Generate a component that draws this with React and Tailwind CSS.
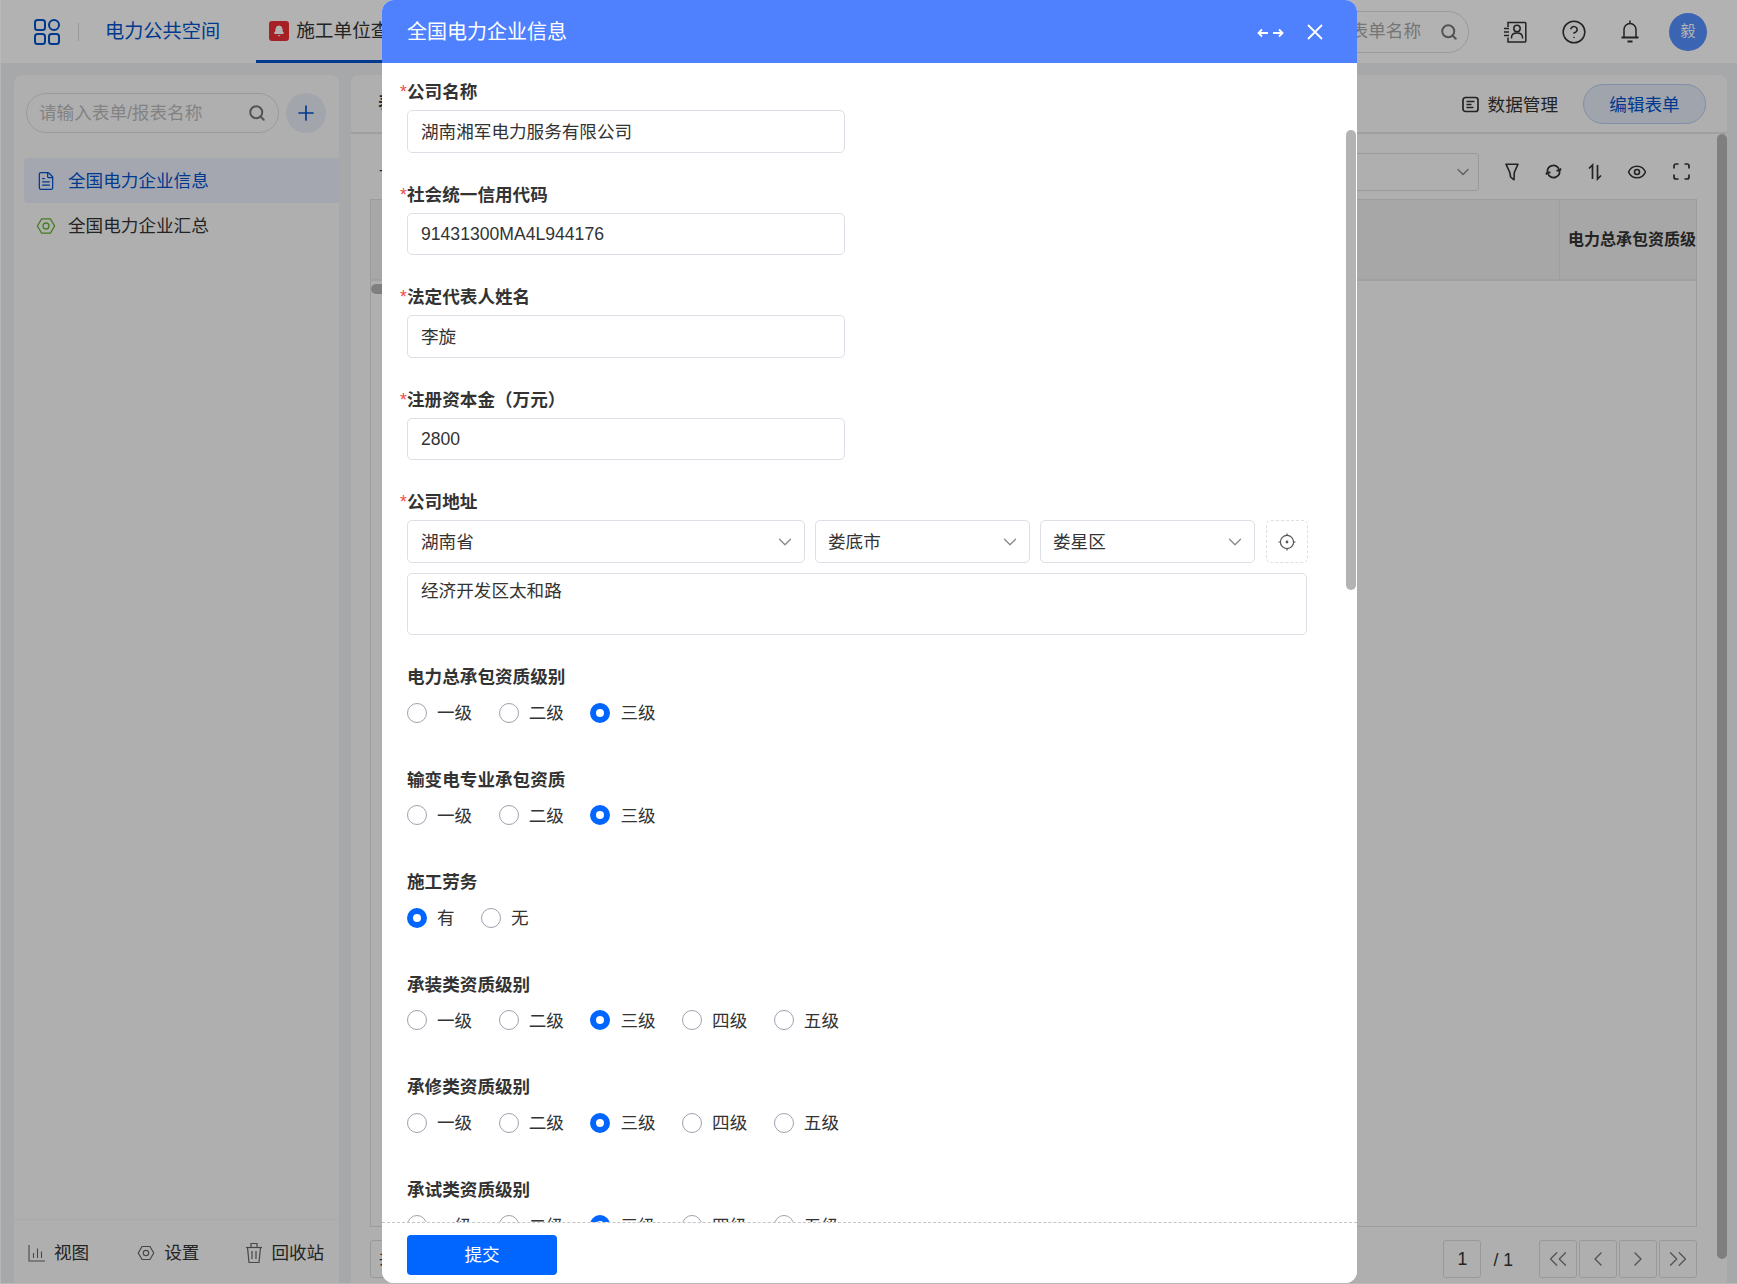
import { useState } from "react";
import {
  Search,
  Plus,
  CircleHelp,
  Bell,
  Eye,
  ChevronDown,
  ChevronLeft,
  ChevronRight,
  ChevronsLeft,
  ChevronsRight,
  FileText,
} from "lucide-react";

const FONT = "font-['Liberation_Sans','Noto_Sans_CJK_SC',sans-serif]";

const HexIcon = ({ className }) => (
  <svg className={className} viewBox="0 0 20 20" fill="none" stroke="currentColor" strokeWidth="1.3">
    <path d="M5.6 2.8h8.8L18.6 10l-4.2 7.2H5.6L1.4 10z" />
    <circle cx="10" cy="10" r="3" />
  </svg>
);

const GridLogo = () => (
  <svg className="h-[26px] w-[26px] text-[#0052cc]" viewBox="0 0 26 26" fill="none" stroke="currentColor" strokeWidth="2">
    <rect x="1" y="1" width="10" height="10" rx="2.5" />
    <rect x="15" y="1" width="10" height="10" rx="5" />
    <rect x="1" y="15" width="10" height="10" rx="2.5" />
    <rect x="15" y="15" width="10" height="10" rx="2.5" />
  </svg>
);

const ContactIcon = () => (
  <svg className="h-[24px] w-[24px] text-[#333]" viewBox="0 0 24 24" fill="none" stroke="currentColor" strokeWidth="1.5">
    <path d="M5 7V2.5h17a.8.8 0 0 1 .8.8v17.9a.8.8 0 0 1-.8.8H5v-4.5" />
    <path d="M1 8.5h5M1 12h5M1 15.5h5" />
    <circle cx="14" cy="8.5" r="3.2" />
    <path d="M8.5 18.5v-1c0-2.5 2-4.5 5.5-4.5s5.5 2 5.5 4.5v1" />
  </svg>
);

const BellIcon = () => (
  <svg className="h-[24px] w-[18px] text-[#333]" viewBox="0 0 18 24" fill="none" stroke="currentColor" strokeWidth="1.5">
    <path d="M9 0.5v3" />
    <path d="M3 17V9.5a6 6 0 0 1 12 0V17" />
    <path d="M0.5 17.5h17" strokeWidth="2" />
    <path d="M6.5 21.5h5" strokeWidth="2" />
  </svg>
);

const DataIcon = () => (
  <svg className="h-[17px] w-[17px] text-[#333]" viewBox="0 0 17 17" fill="none" stroke="currentColor" strokeWidth="1.7">
    <rect x="1" y="1.5" width="15" height="14" rx="2.5" />
    <path d="M4.5 5.5h8M4.5 8.5h5M4.5 11.5h7" />
  </svg>
);

const FunnelIcon = () => (
  <svg className="h-[18px] w-[14px] text-[#333]" viewBox="0 0 14 18" fill="none" stroke="currentColor" strokeWidth="1.6">
    <path d="M1 1.2h12L9.3 9.5 9 16.8 5.6 14 4.8 9.5z" strokeLinejoin="round" />
  </svg>
);

const SyncIcon = () => (
  <svg className="h-[17px] w-[17px] text-[#333]" viewBox="0 0 17 17" fill="none" stroke="currentColor" strokeWidth="1.7">
    <path d="M2.3 8.5a6.2 6.2 0 0 1 10.6-4.2l1.6 3" />
    <path d="M14.7 8.5a6.2 6.2 0 0 1-10.6 4.2l-1.6-3" />
    <path d="M16 5.5 14.5 8l-3-.6" />
    <path d="M1 11.5l1.5-2.5 3 .6" />
  </svg>
);

const SortIcon = () => (
  <svg className="h-[18px] w-[14px] text-[#333]" viewBox="0 0 14 18" fill="none" stroke="currentColor" strokeWidth="1.7">
    <path d="M4.5 16V2L1 5.5" />
    <path d="M9.5 2v14l3.5-3.5" />
  </svg>
);

const CornersIcon = () => (
  <svg className="h-[17px] w-[17px] text-[#333]" viewBox="0 0 17 17" fill="none" stroke="currentColor" strokeWidth="1.7">
    <path d="M1 5.5V3a2 2 0 0 1 2-2h2.5M11.5 1H14a2 2 0 0 1 2 2v2.5M16 11.5V14a2 2 0 0 1-2 2h-2.5M5.5 16H3a2 2 0 0 1-2-2v-2.5" />
  </svg>
);

const ChartIcon = () => (
  <svg className="h-[18px] w-[18px] text-[#666]" viewBox="0 0 18 18" fill="none" stroke="currentColor" strokeWidth="1.1">
    <path d="M1 1v16h16" />
    <path d="M5.5 14V9M9.5 14V4.5M13.5 14V7.5" />
  </svg>
);

const TrashIcon = () => (
  <svg className="h-[22px] w-[18px] text-[#666]" viewBox="0 0 18 22" fill="none" stroke="currentColor" strokeWidth="1.2">
    <path d="M1 5.5h16" />
    <path d="M6 5V1.5h6V5" />
    <path d="M2.5 5.5 4 20.5h10l1.5-15" />
    <path d="M7 9v8M11 9v8" />
  </svg>
);

const TargetIcon = () => (
  <svg className="h-[18px] w-[18px] text-[#555]" viewBox="0 0 18 18" fill="none" stroke="currentColor" strokeWidth="1.2">
    <circle cx="9" cy="9" r="6.6" />
    <circle cx="9" cy="9" r="0.8" fill="currentColor" />
    <path d="M9 0.5v2.5M9 15v2.5M0.5 9H3M15 9h2.5" />
  </svg>
);

const Field = ({ label, required, children }) => (
  <div className="mb-[27px]">
    <Label required={required}>{label}</Label>
    <div className="mt-[3px]">{children}</div>
  </div>
);

const Label = ({ required, children }) => (
  <div className="relative h-[30px] text-[17.6px] leading-[30px] font-bold text-[#333]">
    {required && (
      <span className="absolute top-0 left-[-7px] font-normal text-[#f04b4b]">*</span>
    )}
    {children}
  </div>
);

const TextBox = ({ value }) => (
  <div className="flex h-[42.5px] w-[438px] items-center rounded-[5px] border border-[#dcdfe6] px-[13px] pt-[1px] text-[17.6px] text-[#333]">
    {value}
  </div>
);

const SelectBox = ({ value, className }) => (
  <div
    className={[
      "flex h-[43px] items-center justify-between rounded-[5px] border border-[#dcdfe6] pt-[1px] pr-[8px] text-[17.6px] text-[#333]",
      className,
    ].join(" ")}
  >
    {value}
    <ChevronDown className="h-[22px] w-[22px] text-[#888]" strokeWidth={1.4} />
  </div>
);

const RadioRow = ({ label, options, checked }) => (
  <div className="mb-[30.5px]">
    <Label>{label}</Label>
    <div className="flex h-[42px] items-center gap-[26.5px]">
      {options.map((opt) => (
        <div key={opt} className="flex items-center gap-[10px] text-[17.6px] text-[#333]">
          {opt === checked ? (
            <span className="h-[20px] w-[20px] rounded-full border-[6px] border-[#0066ff] bg-white" />
          ) : (
            <span className="h-[20px] w-[20px] rounded-full border-[1.5px] border-[#a0a0b0] bg-white" />
          )}
          <span className="pt-[1px]">{opt}</span>
        </div>
      ))}
    </div>
  </div>
);

const levels3 = ["一级", "二级", "三级"];
const levels5 = ["一级", "二级", "三级", "四级", "五级"];

const PageButton = ({ children }) => (
  <div className="flex h-[38px] w-[38px] items-center justify-center rounded-[3px] border border-[#dcdcdc] text-[#777]">
    {children}
  </div>
);

export default function App() {
  const [company] = useState("湖南湘军电力服务有限公司");

  return (
    <div className={`relative flex h-screen w-full flex-col overflow-hidden border-b border-l border-[#b8b8b8] bg-[#f0f1f4] ${FONT}`}>
      {/* top bar */}
      <header className="flex h-[63px] shrink-0 items-center bg-white pr-[30px] pl-[33px]">
        <GridLogo />
        <div className="mx-[18px] h-[18px] w-px bg-[#ddd]" />
        <span className="ml-[8px] pt-[1px] text-[19.2px] text-[#0052cc]">电力公共空间</span>
        <div className="ml-[36px] flex h-full items-center gap-[7px] border-b-[3px] border-[#0052cc] px-[13px] pt-[2px] text-[18.7px] text-[#333]">
          <span className="flex h-[20px] w-[20px] items-center justify-center rounded-[3px] bg-[#ee2f36]">
            <Bell className="h-[12px] w-[12px] fill-white text-white" />
          </span>
          施工单位查询
        </div>
        <div className="ml-auto flex h-[42px] w-[260px] items-center justify-end rounded-full border border-[#ddd] pr-[10px] text-[17.6px] text-[#aaa]">
          <span className="mr-[19px]">请输入表单名称</span>
          <Search className="h-[18px] w-[18px] text-[#777]" strokeWidth={2.6} />
        </div>
        <div className="ml-[34px]">
          <ContactIcon />
        </div>
        <CircleHelp className="ml-[34px] h-[26px] w-[26px] text-[#333]" strokeWidth={1.4} />
        <div className="ml-[34px]">
          <BellIcon />
        </div>
        <div className="ml-[30px] flex h-[38px] w-[38px] items-center justify-center rounded-full bg-[#5590ff] text-[15px] text-white">
          毅
        </div>
      </header>

      <div className="flex min-h-0 flex-1 gap-[12px] pt-[12px] pr-[10px] pl-[13px]">
        {/* sidebar */}
        <aside className="flex w-[325px] shrink-0 flex-col rounded-t-lg bg-[#fbfbfb]">
          <div className="flex items-center gap-[7px] pt-[18px] pl-[12px]">
            <div className="flex h-[40px] w-[253px] items-center justify-between rounded-full border border-[#ddd] pr-[12px] pl-[12px] text-[17.6px] text-[#bbb]">
              请输入表单/报表名称
              <Search className="h-[18px] w-[18px] text-[#777]" strokeWidth={2.6} />
            </div>
            <div className="flex h-[40px] w-[40px] items-center justify-center rounded-full bg-[#e8edf7] text-[#0052cc]">
              <Plus className="h-[24px] w-[24px]" strokeWidth={1.7} />
            </div>
          </div>
          <div className="mt-[25px] pl-[10px] text-[17.6px]">
            <div className="flex h-[45px] items-center gap-[12px] rounded-l bg-[#ebf0fb] pt-[1px] pl-[12px] text-[#0052cc]">
              <FileText className="h-[20px] w-[20px]" strokeWidth={1.5} />
              全国电力企业信息
            </div>
            <div className="flex h-[45px] items-center gap-[12px] pt-[1px] pl-[12px] text-[#333]">
              <HexIcon className="h-[20px] w-[20px] text-[#65b32e]" />
              全国电力企业汇总
            </div>
          </div>
          <div className="mt-auto flex h-[64px] items-center border-t border-[#f4f4f4] pt-[3px] pl-[14px] text-[17.6px] text-[#333]">
            <ChartIcon />
            <span className="ml-[8px]">视图</span>
            <HexIcon className="ml-[48px] h-[18px] w-[18px] text-[#666]" />
            <span className="ml-[9px]">设置</span>
            <div className="ml-[46px]">
              <TrashIcon />
            </div>
            <span className="ml-[8px]">回收站</span>
          </div>
        </aside>

        {/* main panel */}
        <main className="relative flex min-w-0 flex-1 flex-col rounded-t-lg bg-[#fbfbfb]">
          <div className="flex h-[59px] shrink-0 items-center border-b-2 border-[#e6e6e6] pr-[21px] pl-[27px] text-[17.6px] text-[#333]">
            <span className="font-bold">表单</span>
            <div className="ml-auto flex items-center gap-[9px] pt-[3px]">
              <DataIcon />
              数据管理
            </div>
            <div className="ml-[25px] flex h-[40px] w-[123px] items-center justify-center rounded-full border border-[#b7cdf0] bg-[#e6ecf8] pt-[3px] text-[#0052cc]">
              编辑表单
            </div>
          </div>

          <div className="flex min-h-0 flex-1 flex-col pr-[30px] pl-[19px]">
            <div className="flex h-[65px] shrink-0 items-center pt-[10px]">
              <span className="pl-[9px] text-[#333]">一</span>
              <div className="ml-auto flex h-[38px] w-[300px] items-center justify-end rounded-[3px] border border-[#ddd] pr-[5px]">
                <ChevronDown className="h-[20px] w-[20px] text-[#888]" strokeWidth={1.5} />
              </div>
              <div className="ml-[26px] flex w-[192px] items-center justify-between pr-[7px]">
                <FunnelIcon />
                <SyncIcon />
                <SortIcon />
                <Eye className="h-[20px] w-[20px] text-[#333]" strokeWidth={1.9} />
                <CornersIcon />
              </div>
            </div>

            <div className="relative min-h-0 flex-1 border border-[#e0e0e0]">
              <div className="flex h-[81px] justify-end overflow-hidden border-b-2 border-[#e6e6e6] bg-[#f0f0f0]">
                <div className="flex w-[137px] shrink-0 items-center overflow-hidden border-l border-[#e2e2e2] pl-[8px] text-[16px] font-bold whitespace-nowrap text-[#333]">
                  电力总承包资质级别
                </div>
              </div>
              <div className="absolute top-[84px] left-0 h-[10px] w-[40px] rounded-full bg-[#b6b6b6]" />
            </div>

            <div className="flex h-[56px] shrink-0 items-start pt-[13px]">
              <div className="flex h-[38px] w-[60px] items-center rounded-[3px] border border-[#dcdcdc] pl-[8px] text-[16px] text-[#333]">
                共
              </div>
              <div className="ml-auto flex h-[38px] w-[38px] items-center justify-center rounded-[3px] border border-[#dcdcdc] text-[17.6px] text-[#333]">
                1
              </div>
              <span className="mt-[7px] mr-[26px] ml-[12px] text-[17.6px] text-[#333]">/ 1</span>
              <div className="flex gap-[2px]">
                <PageButton>
                  <ChevronsLeft className="h-[30px] w-[30px]" strokeWidth={1} />
                </PageButton>
                <PageButton>
                  <ChevronLeft className="h-[24px] w-[24px]" strokeWidth={1.4} />
                </PageButton>
                <PageButton>
                  <ChevronRight className="h-[24px] w-[24px]" strokeWidth={1.4} />
                </PageButton>
                <PageButton>
                  <ChevronsRight className="h-[30px] w-[30px]" strokeWidth={1} />
                </PageButton>
              </div>
            </div>
          </div>

          <div className="absolute top-[59px] right-0 h-[1125px] w-[10px] rounded-full bg-[#b6b6b6]" />
        </main>
      </div>

      <div className="absolute inset-0 bg-black/30" />

      {/* modal */}
      <div className="absolute top-0 left-[381px] flex h-[1283px] w-[975px] flex-col overflow-hidden rounded-[12px] bg-white">
        <div className="flex h-[63px] shrink-0 items-center bg-[#4f81ff] pl-[25px] text-[20px] text-white">
          <span className="pt-[1px]">全国电力企业信息</span>
          <svg className="mt-[3px] ml-auto h-[10px] w-[27px]" viewBox="0 0 27 10" fill="none" stroke="white" strokeWidth="1.8">
            <path d="M11 5H1.5M5 1.5 1.5 5 5 8.5" />
            <path d="M16 5h9.5M22 1.5 25.5 5 22 8.5" />
          </svg>
          <svg className="mr-[34px] ml-[23px] h-[16px] w-[16px]" viewBox="0 0 16 16" fill="none" stroke="white" strokeWidth="1.8">
            <path d="M1 1l14 14M15 1 1 15" />
          </svg>
        </div>

        <div className="relative min-h-0 flex-1 overflow-hidden">
          <div className="pt-[14px] pl-[25px]">
            <Field label="公司名称" required>
              <TextBox value={company} />
            </Field>
            <Field label="社会统一信用代码" required>
              <TextBox value="91431300MA4L944176" />
            </Field>
            <Field label="法定代表人姓名" required>
              <TextBox value="李旋" />
            </Field>
            <Field label="注册资本金（万元）" required>
              <TextBox value="2800" />
            </Field>
            <Field label="公司地址" required>
              <div className="flex gap-[10px]">
                <SelectBox value={<span className="pl-[13px]">湖南省</span>} className="w-[398px]" />
                <SelectBox value={<span className="pl-[12px]">娄底市</span>} className="w-[215px]" />
                <SelectBox value={<span className="pl-[12px]">娄星区</span>} className="w-[215px]" />
                <div className="ml-[1px] flex h-[43px] w-[42px] items-center justify-center rounded-[5px] border border-dashed border-[#dcdfe6]">
                  <TargetIcon />
                </div>
              </div>
              <div className="mt-[10px] h-[62px] w-[900px] rounded-[5px] border border-[#dcdfe6] px-[13px] pt-[4px] text-[17.6px] text-[#333]">
                经济开发区太和路
              </div>
            </Field>
            <RadioRow label="电力总承包资质级别" options={levels3} checked="三级" />
            <RadioRow label="输变电专业承包资质" options={levels3} checked="三级" />
            <RadioRow label="施工劳务" options={["有", "无"]} checked="有" />
            <RadioRow label="承装类资质级别" options={levels5} checked="三级" />
            <RadioRow label="承修类资质级别" options={levels5} checked="三级" />
            <RadioRow label="承试类资质级别" options={levels5} checked="三级" />
          </div>
          <div className="absolute top-[67px] right-[1px] h-[460px] w-[10px] rounded-full bg-[#b3b3b3]" />
        </div>

        <div className="flex h-[61px] shrink-0 items-start border-t border-dashed border-[#c4c4c4] bg-white pt-[12px] pl-[25px]">
          <div className="flex h-[40px] w-[150px] items-center justify-center rounded-[4px] bg-[#0066ff] text-[17.6px] text-white">
            提交
          </div>
        </div>
      </div>
    </div>
  );
}
